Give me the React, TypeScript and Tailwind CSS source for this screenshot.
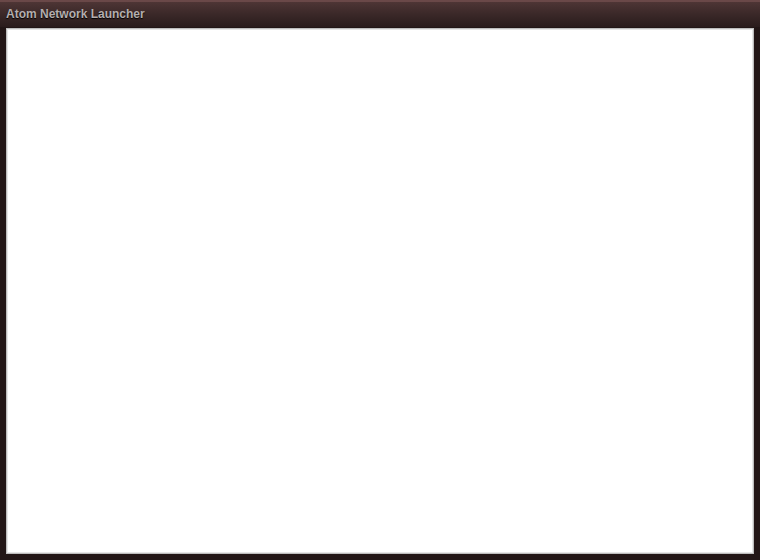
import React from "react";

export default function App() {
  return (
    <div className="w-[760px] h-[560px] flex flex-col bg-[#221616] overflow-hidden" style={{ fontFamily: '"Liberation Sans", Arial, sans-serif' }}>
      <div className="h-[27px] shrink-0 flex items-center pl-[6px] pb-[2px] bg-gradient-to-b from-[#4e3535] via-[#3a2828] to-[#2a1c1c] border-t-2 border-[#6a4848]">
        <span className="text-[12px] font-bold text-[#b4aeae] leading-none [text-shadow:0_1px_1px_#000]">Atom Network Launcher</span>
      </div>
      <div className="flex-1 flex px-[6px] pt-[1px] pb-[6px]">
        <div className="flex-1 bg-[#bdbdbd] p-px">
          <div className="w-full h-full bg-white border border-[#e6e6e6]" />
        </div>
      </div>
    </div>
  );
}
